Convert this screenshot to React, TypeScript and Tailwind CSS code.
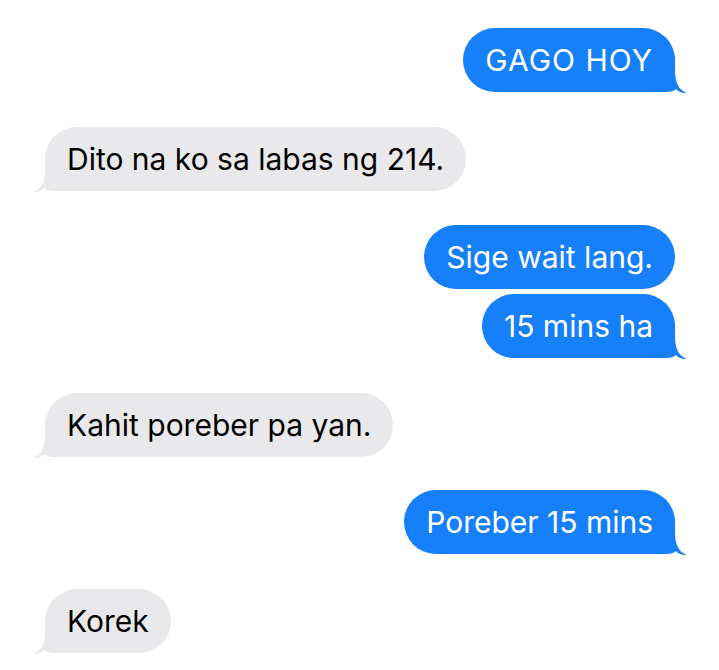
import React from "react";

type Msg = { text: string; me: boolean; tail: boolean; gap: number; track?: boolean };

const msgs: Msg[] = [
  { text: "GAGO HOY", me: true, tail: true, gap: 0, track: true },
  { text: "Dito na ko sa labas ng 214.", me: false, tail: true, gap: 35 },
  { text: "Sige wait lang.", me: true, tail: false, gap: 34 },
  { text: "15 mins ha", me: true, tail: true, gap: 5 },
  { text: "Kahit poreber pa yan.", me: false, tail: true, gap: 35 },
  { text: "Poreber 15 mins", me: true, tail: true, gap: 33 },
  { text: "Korek", me: false, tail: true, gap: 35 },
];

const BLUE = "#167ffa";
const GRAY = "#e9e9eb";

function Tail({ me }: { me: boolean }) {
  return (
    <svg
      width="47"
      height="37"
      viewBox="0 0 47 37"
      className={
        me
          ? "absolute right-[-12px] bottom-[-1px]"
          : "absolute left-[-12px] bottom-[-1px] -scale-x-100"
      }
    >
      <path
        d="M0 0 H35 V14 C35 26 38 33 46.5 37 C42 37.3 38 35.8 36 33 C34 35.5 29 36 22 36 H0 Z"
        fill={me ? BLUE : GRAY}
      />
    </svg>
  );
}

function Bubble({ m }: { m: Msg }) {
  return (
    <div
      className={`flex ${m.me ? "justify-end pr-[44px]" : "justify-start pl-[45px]"}`}
      style={{ marginTop: m.gap }}
    >
      <div
        className={`relative h-[64px] flex items-center px-[22px] rounded-[32px] text-[30px] ${
          m.me ? "bg-[#167ffa] text-white" : "bg-[#e9e9eb] text-black"
        } ${m.track ? "tracking-[1px]" : ""}`}
      >
        {m.tail && <Tail me={m.me} />}
        <span className="relative leading-none">{m.text}</span>
      </div>
    </div>
  );
}

export default function App() {
  return (
    <div
      className="w-[719px] h-[670px] bg-white pt-[28px] overflow-hidden"
      style={{ fontFamily: "Inter, 'Noto Sans', sans-serif" }}
    >
      {msgs.map((m, i) => (
        <Bubble key={i} m={m} />
      ))}
    </div>
  );
}
